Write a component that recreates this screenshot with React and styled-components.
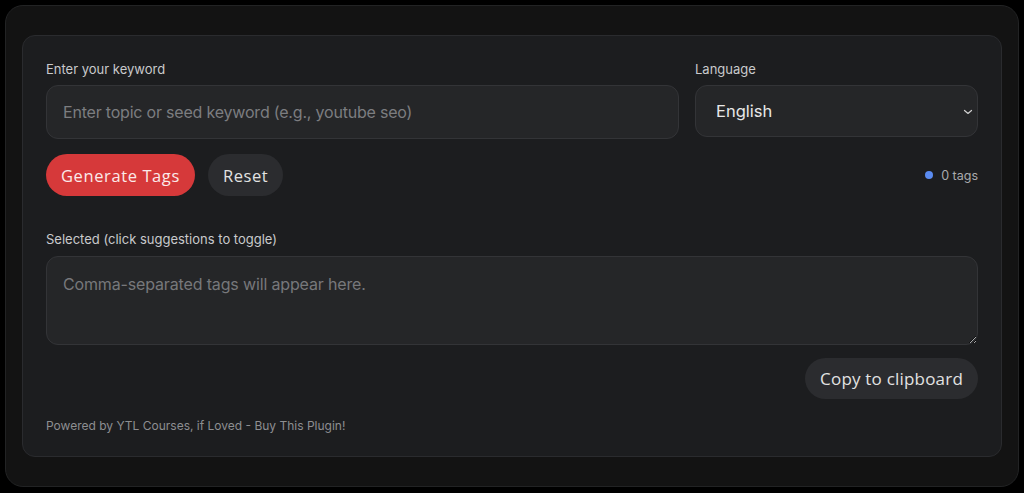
import React from "react";
import styled, { createGlobalStyle } from "styled-components";

const Global = createGlobalStyle`
  * { box-sizing: border-box; }
  html, body { margin: 0; padding: 0; background: #000; }
  body { font-family: Inter, "Noto Sans", sans-serif; color-scheme: dark; }
`;

const Page = styled.div`
  padding: 5px;
  height: 493px;
`;

const Frame = styled.div`
  background: #131313;
  border: 1px solid #222324;
  border-radius: 18px;
  padding: 29px 16px;
  height: 482px;
`;

const Card = styled.div`
  background: #1c1d1f;
  border: 1px solid #2a2b2e;
  border-radius: 13px;
  padding: 25px 23px 23px;
  display: flex;
  flex-direction: column;
`;

const TopRow = styled.div`
  display: flex;
  gap: 16px;
  align-items: flex-start;
`;

const Field = styled.div`
  display: flex;
  flex-direction: column;
  gap: 8px;
  flex: ${(p) => (p.$grow ? "1 1 auto" : "0 0 283px")};
`;

const Label = styled.label`
  font-size: 13px;
  line-height: 16px;
  color: #c9cacc;
  font-family: Inter, sans-serif;
`;

const TextInput = styled.input`
  height: 54px;
  width: 100%;
  background: #252628;
  border: 1px solid #333437;
  border-radius: 12px;
  padding: 0 16px;
  font-family: Inter, sans-serif;
  font-size: 16px;
  letter-spacing: -0.2px;
  color: #e6e6e6;
  outline: none;
  &::placeholder { color: #7c7d80; }
`;

const SelectWrap = styled.div`
  position: relative;
  height: 52px;
`;

const Select = styled.select`
  appearance: none;
  -webkit-appearance: none;
  width: 100%;
  height: 52px;
  background: #252628;
  border: 1px solid #333437;
  border-radius: 12px;
  padding: 0 20px;
  font-family: Inter, sans-serif;
  font-size: 16.5px;
  color: #e8e8e8;
  outline: none;
`;

const Chevron = styled.svg`
  position: absolute;
  right: 4px;
  top: 23px;
  pointer-events: none;
`;

const ActionRow = styled.div`
  display: flex;
  align-items: center;
  gap: 13px;
  margin-top: 15px;
`;

const Pill = styled.button`
  height: ${(p) => (p.$h ? p.$h : 42)}px;
  border-radius: 999px;
  border: none;
  padding: 0 15px;
  font-family: "Open Sans", sans-serif;
  font-size: ${(p) => (p.$fs ? p.$fs : 16.5)}px;
  letter-spacing: ${(p) => (p.$ls !== undefined ? p.$ls : 0.6)}px;
  color: ${(p) => (p.$primary ? "#fbeaea" : "#e2e2e2")};
  background: ${(p) => (p.$primary ? "#d6393a" : "#2b2c2f")};
  cursor: pointer;
`;

const Counter = styled.div`
  margin-left: auto;
  display: flex;
  align-items: center;
  gap: 8px;
  font-size: 12.5px;
  color: #a9aaad;
  font-family: Inter, sans-serif;
`;

const Dot = styled.span`
  width: 8px;
  height: 8px;
  border-radius: 50%;
  background: #5a8bf0;
`;

const SelectedBlock = styled.div`
  display: flex;
  flex-direction: column;
  gap: 9px;
  margin-top: 35px;
`;

const TextArea = styled.textarea`
  height: 89px;
  width: 100%;
  background: #252628;
  border: 1px solid #333437;
  border-radius: 12px;
  padding: 17px 16px;
  font-family: Inter, sans-serif;
  font-size: 16px;
  letter-spacing: -0.15px;
  color: #e6e6e6;
  outline: none;
  resize: vertical;
  &::placeholder { color: #77787b; }
`;

const CopyRow = styled.div`
  display: flex;
  justify-content: flex-end;
  margin-top: 13px;
`;

const Footer = styled.div`
  margin-top: 19px;
  font-size: 12px;
  color: #8d8e91;
  font-family: Inter, sans-serif;
`;

export default function App() {
  return (
    <>
      <Global />
      <Page>
        <Frame>
          <Card>
            <TopRow>
              <Field $grow>
                <Label>Enter your keyword</Label>
                <TextInput placeholder="Enter topic or seed keyword (e.g., youtube seo)" />
              </Field>
              <Field>
                <Label>Language</Label>
                <SelectWrap>
                  <Select defaultValue="en">
                    <option value="en">English</option>
                  </Select>
                  <Chevron width="12" height="8" viewBox="0 0 12 8">
                    <path d="M2.5 2.5 L6 5.5 L9.5 2.5" fill="none" stroke="#cfcfcf" strokeWidth="1.2" strokeLinecap="round" strokeLinejoin="round" />
                  </Chevron>
                </SelectWrap>
              </Field>
            </TopRow>
            <ActionRow>
              <Pill $primary>Generate Tags</Pill>
              <Pill>Reset</Pill>
              <Counter>
                <Dot />
                0 tags
              </Counter>
            </ActionRow>
            <SelectedBlock>
              <Label>Selected (click suggestions to toggle)</Label>
              <TextArea readOnly placeholder="Comma-separated tags will appear here." />
            </SelectedBlock>
            <CopyRow>
              <Pill $h={41} $fs={17} $ls={0.2}>Copy to clipboard</Pill>
            </CopyRow>
            <Footer>Powered by YTL Courses, if Loved - Buy This Plugin!</Footer>
          </Card>
        </Frame>
      </Page>
    </>
  );
}
